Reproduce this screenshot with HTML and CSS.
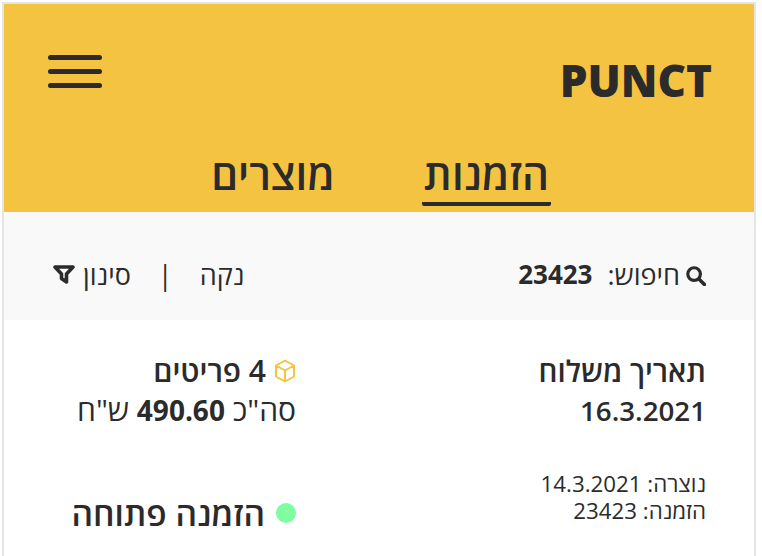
FILE: index.html
```html
<!DOCTYPE html>
<html lang="he" dir="rtl">
<head>
    <meta charset="UTF-8">
    <title>Punct orders</title>
    <link rel="stylesheet" href="styles.css">
</head>
<body>
<div class="phone-frame">
    <header class="header">
        <div class="top-row">
            <div class="logo">PUNCT</div>
            <button class="menu-button" aria-label="menu">
                <span></span>
                <span></span>
                <span></span>
            </button>
        </div>
        <nav class="tabs">
            <a class="tab active">הזמנות</a>
            <a class="tab">מוצרים</a>
        </nav>
    </header>

    <div class="search-bar">
        <div class="search-info">
            <svg class="search-icon" viewBox="0 0 19 19" width="20" height="20">
                <circle cx="7.700" cy="7.700" r="6" fill="none" stroke="#2b2b2b" stroke-width="3"/>
                <path d="M12.500 12.500l5 5" stroke="#2b2b2b" stroke-width="3.400" stroke-linecap="round"/>
            </svg>
            <span>חיפוש:</span>
            <b class="search-value">23423</b>
        </div>
        <div class="search-actions">
            <span>נקה</span>
            <span class="divider">|</span>
            <span>סינון</span>
            <svg class="filter-icon" viewBox="0 0 22 19" width="22" height="19">
                <path d="M2 2h18l-6.500 7v8l-5-3.500V9z" fill="none" stroke="#2b2b2b" stroke-width="3.600" stroke-linejoin="round"/>
            </svg>
        </div>
    </div>

    <section class="order">
        <div class="order-main">
            <div class="order-title">תאריך משלוח</div>
            <div class="order-date">16.3.2021</div>
            <div class="order-meta">
                <div>נוצרה: 14.3.2021</div>
                <div>הזמנה: 23423</div>
            </div>
        </div>
        <div class="order-side">
            <div class="items-row">
                <svg class="box-icon" viewBox="0 0 22 24" width="22" height="24">
                    <path d="M11 1.500l9 5v11l-9 5-9-5v-11zM2 6.500l9 5 9-5M11 11.500v11" fill="none" stroke="#f5c342" stroke-width="2" stroke-linejoin="round"/>
                </svg>
                <span>4 פריטים</span>
            </div>
            <div class="total">סה"כ <b>490.60</b> ש"ח</div>
            <div class="status">
                <span class="status-dot"></span>
                <span>הזמנה פתוחה</span>
            </div>
        </div>
    </section>
</div>
</body>
</html>
```

FILE: styles.css
```css
html, body {
    margin: 0;
    height: 100%;
    overflow: hidden;
    background: #fff;
}

body {
    font-family: "Open Sans", "Noto Sans", sans-serif;
    color: #2b2b2b;
}

.phone-frame {
    width: 750px;
    height: 552px;
    margin: 2px auto 0 2px;
    border: 2px solid #e5e5e5;
    border-bottom: 0;
}

.header {
    background: #f5c342;
    height: 208px;
    padding: 0 42px 0 44px;
    box-sizing: border-box;
}

.top-row {
    display: flex;
    justify-content: space-between;
    align-items: flex-start;
    height: 140px;
}

.logo {
    font-size: 44px;
    font-weight: 800;
    line-height: 60px;
    margin-top: 46px;
}

.menu-button {
    display: flex;
    flex-direction: column;
    gap: 9px;
    width: 54px;
    padding: 0;
    margin-top: 51px;
    border: 0;
    background: none;
}

.menu-button span {
    display: block;
    height: 5px;
    width: 100%;
    border-radius: 3px;
    background: #2b2b2b;
}

.tabs {
    display: flex;
    gap: 85px;
    padding-right: 161px;
}

.tab {
    font-size: 42px;
    font-weight: 600;
    line-height: 60px;
    height: 62px;
    padding: 0 2px;
    box-sizing: border-box;
}

.tab.active {
    border-bottom: 4px solid #2b2b2b;
    border-radius: 2px;
}

.search-bar {
    display: flex;
    justify-content: space-between;
    align-items: center;
    height: 108px;
    padding: 16px 48px 0 49px;
    box-sizing: border-box;
    background: #f9f9f9;
    font-size: 27px;
}

.search-info {
    display: flex;
    align-items: center;
    gap: 6px;
}

.search-icon {
    margin-top: 3px;
}

.search-value {
    margin-right: 9px;
    font-size: 26px;
    font-weight: 700;
}

.search-actions {
    display: flex;
    align-items: center;
    gap: 22px;
}

.divider {
    margin: 0 5px;
}

.filter-icon {
    margin-right: -14px;
}

.order {
    display: flex;
    padding-top: 30px;
}

.order-main {
    flex: 1;
    padding-right: 48px;
    white-space: nowrap;
}

.order-side {
    width: 292px;
    white-space: nowrap;
}

.order-title,
.items-row {
    font-size: 29.500px;
    line-height: 42px;
    font-weight: 600;
}

.items-row {
    display: flex;
    align-items: center;
    gap: 8px;
    font-size: 30px;
}

.order-date {
    font-size: 27.700px;
    line-height: 36px;
    font-weight: 600;
}

.total {
    font-size: 30px;
    line-height: 36px;
}

.total b {
    font-size: 28px;
    font-weight: 700;
}

.order-meta {
    margin-top: 42px;
    font-size: 22.300px;
    line-height: 27px;
}

.status {
    display: flex;
    align-items: center;
    gap: 11px;
    margin-top: 63px;
    font-size: 33.500px;
    font-weight: 600;
    line-height: 44px;
}

.status-dot {
    width: 20px;
    height: 20px;
    border-radius: 50%;
    background: #80fca2;
}
```
